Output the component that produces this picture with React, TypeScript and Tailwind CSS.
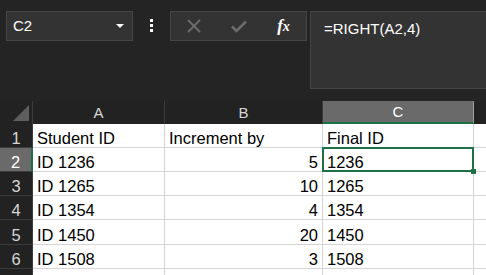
const rows = [
  ["Student ID", "Increment by", "Final ID"],
  ["ID 1236", "5", "1236"],
  ["ID 1265", "10", "1265"],
  ["ID 1354", "4", "1354"],
  ["ID 1450", "20", "1450"],
  ["ID 1508", "3", "1508"],
];

const rowHeights = ["h-[24px]", "h-[24px]", "h-[24px]", "h-[24px]", "h-[25px]", "h-[24px]"];

export default function App() {
  return (
    <div className="w-[486px] h-[275px] overflow-hidden bg-[#242424] font-['Liberation_Sans',sans-serif]">
      {/* formula bar */}
      <div className="flex h-[101px] items-start pt-[11px] pl-[6px]">
        <div className="flex h-[30px] w-[127px] items-center justify-between border border-[#454545] bg-[#333333] pl-[6px] pr-[8px]">
          <span className="text-[15px] text-white">C2</span>
          <svg width="8" height="5" viewBox="0 0 8 5">
            <path d="M0 0 L8 0 L4 4 Z" fill="#ffffff" />
          </svg>
        </div>
        <div className="ml-[17px] mr-[17px] mt-[8px] flex flex-col gap-[2px]">
          <div className="h-[3px] w-[3px] bg-white" />
          <div className="h-[3px] w-[3px] bg-white" />
          <div className="h-[3px] w-[3px] bg-white" />
        </div>
        <div className="flex h-[30px] w-[137px] items-center border border-[#454545] bg-[#333333]">
          <div className="flex w-[45px] justify-center">
            <svg width="14" height="14" viewBox="0 0 14 14">
              <path d="M1 1 L13 13 M13 1 L1 13" stroke="#6b6b6b" strokeWidth="2" />
            </svg>
          </div>
          <div className="flex w-[45px] justify-center">
            <svg width="16" height="13" viewBox="0 0 16 13">
              <path d="M1 6.5 L5.5 11 L15 1.5" stroke="#6b6b6b" strokeWidth="2.6" fill="none" />
            </svg>
          </div>
          <div className="flex w-[45px] justify-center">
            <span className="font-['Liberation_Serif',serif] text-[17px] font-bold italic text-white">
              f<span className="text-[14px]">x</span>
            </span>
          </div>
        </div>
        <div className="ml-[3px] h-[78px] flex-1 border border-[#454545] border-r-0 bg-[#333333] pl-[13px] pt-[5px]">
          <span className="text-[15px] text-white">=RIGHT(A2,4)</span>
        </div>
      </div>

      {/* sheet */}
      <div className="grid grid-cols-[33px_132px_158px_151px_1fr]">
        <div className="relative h-[23px] border-r border-[#3c3c3c] bg-[#222222]">
          <svg className="absolute right-[3px] bottom-[3px]" width="16" height="16" viewBox="0 0 16 16">
            <path d="M16 0 L16 16 L0 16 Z" fill="#5e5e5e" />
          </svg>
        </div>
        <div className="flex h-[23px] items-center justify-center border-r border-[#3c3c3c] bg-[#222222] pt-[2px] text-[15px] text-[#d6d6d6]">A</div>
        <div className="flex h-[23px] items-center justify-center border-r border-[#3c3c3c] bg-[#222222] pt-[2px] text-[15px] text-[#d6d6d6]">B</div>
        <div className="flex h-[23px] items-center justify-center border-r border-b-2 border-r-[#a0a0a0] border-b-[#1e7145] bg-[#6a6a6a] pt-[1px] text-[15px] text-white">C</div>
        <div className="h-[23px] bg-[#222222]" />

        {rows.map((r, i) => (
          <RowCells key={i} n={i + 1} cells={r} h={rowHeights[i]} />
        ))}

        <div className="h-[10px] border-r border-[#3c3c3c] bg-[#222222]" />
        <div className="h-[10px] border-r border-[#d4d4d4] bg-white" />
        <div className="h-[10px] border-r border-[#d4d4d4] bg-white" />
        <div className="h-[10px] border-r border-[#d4d4d4] bg-white" />
        <div className="h-[10px] bg-white" />
      </div>
    </div>
  );
}

function RowCells({ n, cells, h }: { n: number; cells: string[]; h: string }) {
  const sel = n === 2;
  return (
    <>
      <div
        className={
          sel
            ? `${h} flex items-end justify-center border-r-2 border-b border-r-[#1e7145] border-b-[#3c3c3c] bg-[#6a6a6a] pb-[1px] text-[16.5px] leading-[16px] text-white`
            : `${h} flex items-end justify-center border-r border-b border-[#3c3c3c] bg-[#222222] pb-[1px] text-[16.5px] leading-[16px] text-[#d6d6d6]`
        }
      >
        {n}
      </div>
      <div className={`${h} flex items-end border-r border-b border-[#d4d4d4] bg-white pb-[1px] pl-[4px] text-[16.5px] leading-[16px] text-black`}>
        {cells[0]}
      </div>
      <div
        className={`${h} flex items-end border-r border-b border-[#d4d4d4] bg-white pb-[1px] text-[16.5px] leading-[16px] text-black ${
          n === 1 ? "pl-[4px]" : "justify-end pr-[4px]"
        }`}
      >
        {cells[1]}
      </div>
      <div className={`${h} relative flex items-end border-r border-b border-[#d4d4d4] bg-white pb-[1px] pl-[4px] text-[16.5px] leading-[16px] text-black`}>
        {cells[2]}
        {sel && (
          <>
            <div className="absolute -left-[1px] -top-[1px] -right-[1px] -bottom-[1px] z-10 border-2 border-[#1e7145]" />
            <div className="absolute -right-[3px] -bottom-[3px] z-10 h-[5px] w-[5px] bg-[#1e7145]" />
          </>
        )}
      </div>
      <div className={`${h} border-b border-[#d4d4d4] bg-white`} />
    </>
  );
}
